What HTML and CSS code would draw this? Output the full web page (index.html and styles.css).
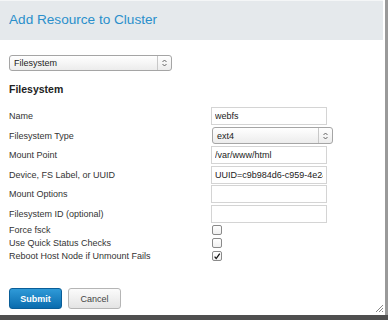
FILE: index.html
```html
<!DOCTYPE html>
<html lang="en">
<head>
    <meta charset="UTF-8">
    <title>Add Resource to Cluster</title>
    <link rel="stylesheet" href="styles.css">
</head>
<body>
    <div class="dialog">
        <div class="dialog-header">
            <h1>Add Resource to Cluster</h1>
        </div>

        <div class="dialog-body">
            <div class="fake-select type-select">
                <span class="fake-select-text">Filesystem</span>
                <span class="fake-select-arrow">
                    <svg width="5" height="8" viewBox="0 0 5 8"><path d="M0.5 3L2.5 1L4.5 3M0.5 5L2.5 7L4.5 5" fill="none" stroke="#555" stroke-width="0.9"/></svg>
                </span>
            </div>

            <h2>Filesystem</h2>

            <div class="form-grid">
                <label>Name</label>
                <input type="text" class="text-input" value="webfs">

                <label>Filesystem Type</label>
                <div class="fake-select fs-select">
                    <span class="fake-select-text">ext4</span>
                    <span class="fake-select-arrow">
                        <svg width="5" height="8" viewBox="0 0 5 8"><path d="M0.5 3L2.5 1L4.5 3M0.5 5L2.5 7L4.5 5" fill="none" stroke="#555" stroke-width="0.9"/></svg>
                    </span>
                </div>

                <label>Mount Point</label>
                <input type="text" class="text-input" value="/var/www/html">

                <label>Device, FS Label, or UUID</label>
                <input type="text" class="text-input" value="UUID=c9b984d6-c959-4e24-9b1c-3f5e2a7d0c11">

                <label>Mount Options</label>
                <input type="text" class="text-input" value="">

                <label>Filesystem ID (optional)</label>
                <input type="text" class="text-input" value="">
            </div>

            <div class="check-grid">
                <label>Force fsck</label>
                <span class="check"></span>

                <label>Use Quick Status Checks</label>
                <span class="check"></span>

                <label>Reboot Host Node if Unmount Fails</label>
                <span class="check">
                    <svg width="9" height="9" viewBox="0 0 9 9"><path d="M1.8 4.6L3.6 6.8L7.6 1.2" fill="none" stroke="#111" stroke-width="1.4"/></svg>
                </span>
            </div>

            <div class="buttons">
                <button class="btn btn-primary">Submit</button>
                <button class="btn">Cancel</button>
            </div>
        </div>

        <svg class="grip" width="9" height="9" viewBox="0 0 9 9">
            <path d="M1 8L8 1M4 8L8 4M7 8L8 7" stroke="#888" stroke-width="1"/>
        </svg>
    </div>
</body>
</html>
```

FILE: styles.css
```css
body, html {
    margin: 0;
    padding: 0;
    background-color: #4f4f4f;
    font-family: 'Liberation Sans', Arial, sans-serif;
}

.dialog {
    position: relative;
    width: 385px;
    height: 315px;
    background-color: white;
    border-right: 3px solid #9a9a9a;
}

.dialog-header {
    height: 40px;
    margin-right: 2px;
    background-color: #e5e9ec;
    border-top: 1px solid #f4f6f7;
    box-sizing: border-box;
}

    .dialog-header h1 {
        margin: 0;
        padding-left: 9px;
        line-height: 38px;
        font-size: 13.6px;
        font-weight: normal;
        color: #2a8fcb;
    }

.dialog-body {
    padding: 15px 9px 0 9px;
}

h2 {
    margin: 12px 0 12px 0;
    font-size: 10.5px;
    font-weight: bold;
    color: #222;
}

.fake-select {
    display: flex;
    align-items: stretch;
    box-sizing: border-box;
    height: 16px;
    border: 1px solid #a5a5a5;
    border-radius: 3px;
    background: linear-gradient(#ffffff, #ececec);
    font-size: 9px;
    color: #222;
}

.type-select {
    width: 163px;
}

.fs-select {
    width: 121px;
    height: 17px;
    margin-left: 1px;
}

.fake-select-text {
    flex: 1;
    padding-left: 4px;
    display: flex;
    align-items: center;
}

.fake-select-arrow {
    width: 13px;
    border-left: 1px solid #c8c8c8;
    display: flex;
    align-items: center;
    justify-content: center;
}

.form-grid {
    display: grid;
    grid-template-columns: 202px 1fr;
    grid-auto-rows: 18px;
    row-gap: 1.6px;
    align-items: center;
}

.form-grid label,
.check-grid label {
    font-size: 9px;
    color: #333;
}

.text-input {
    box-sizing: border-box;
    width: 116px;
    height: 18px;
    margin: 0;
    padding: 0 3px;
    border: 1px solid #d4d4d4;
    font-family: 'Liberation Sans', Arial, sans-serif;
    font-size: 9px;
    color: #222;
    outline: none;
}

.check-grid {
    display: grid;
    grid-template-columns: 202px 1fr;
    grid-auto-rows: 13.4px;
    align-items: center;
    margin-top: 0;
}

.check {
    box-sizing: border-box;
    width: 10px;
    height: 10px;
    margin-left: 1px;
    border: 1px solid #8a8a8a;
    border-radius: 2px;
    background: linear-gradient(#ffffff, #f0f0f0);
    display: flex;
    align-items: center;
    justify-content: center;
}

.buttons {
    display: flex;
    gap: 6px;
    margin-top: 25px;
}

.btn {
    box-sizing: border-box;
    width: 53px;
    height: 21px;
    padding: 0;
    border: 1px solid #b5b5b5;
    border-radius: 3px;
    background: linear-gradient(#fbfbfb, #e4e4e4);
    font-family: 'Liberation Sans', Arial, sans-serif;
    font-size: 9px;
    color: #444;
}

.btn-primary {
    border-color: #0a5e98;
    background: linear-gradient(#2f9ad8, #0a6cae);
    color: white;
    font-weight: bold;
}

.grip {
    position: absolute;
    right: 1px;
    bottom: 2px;
}
```
